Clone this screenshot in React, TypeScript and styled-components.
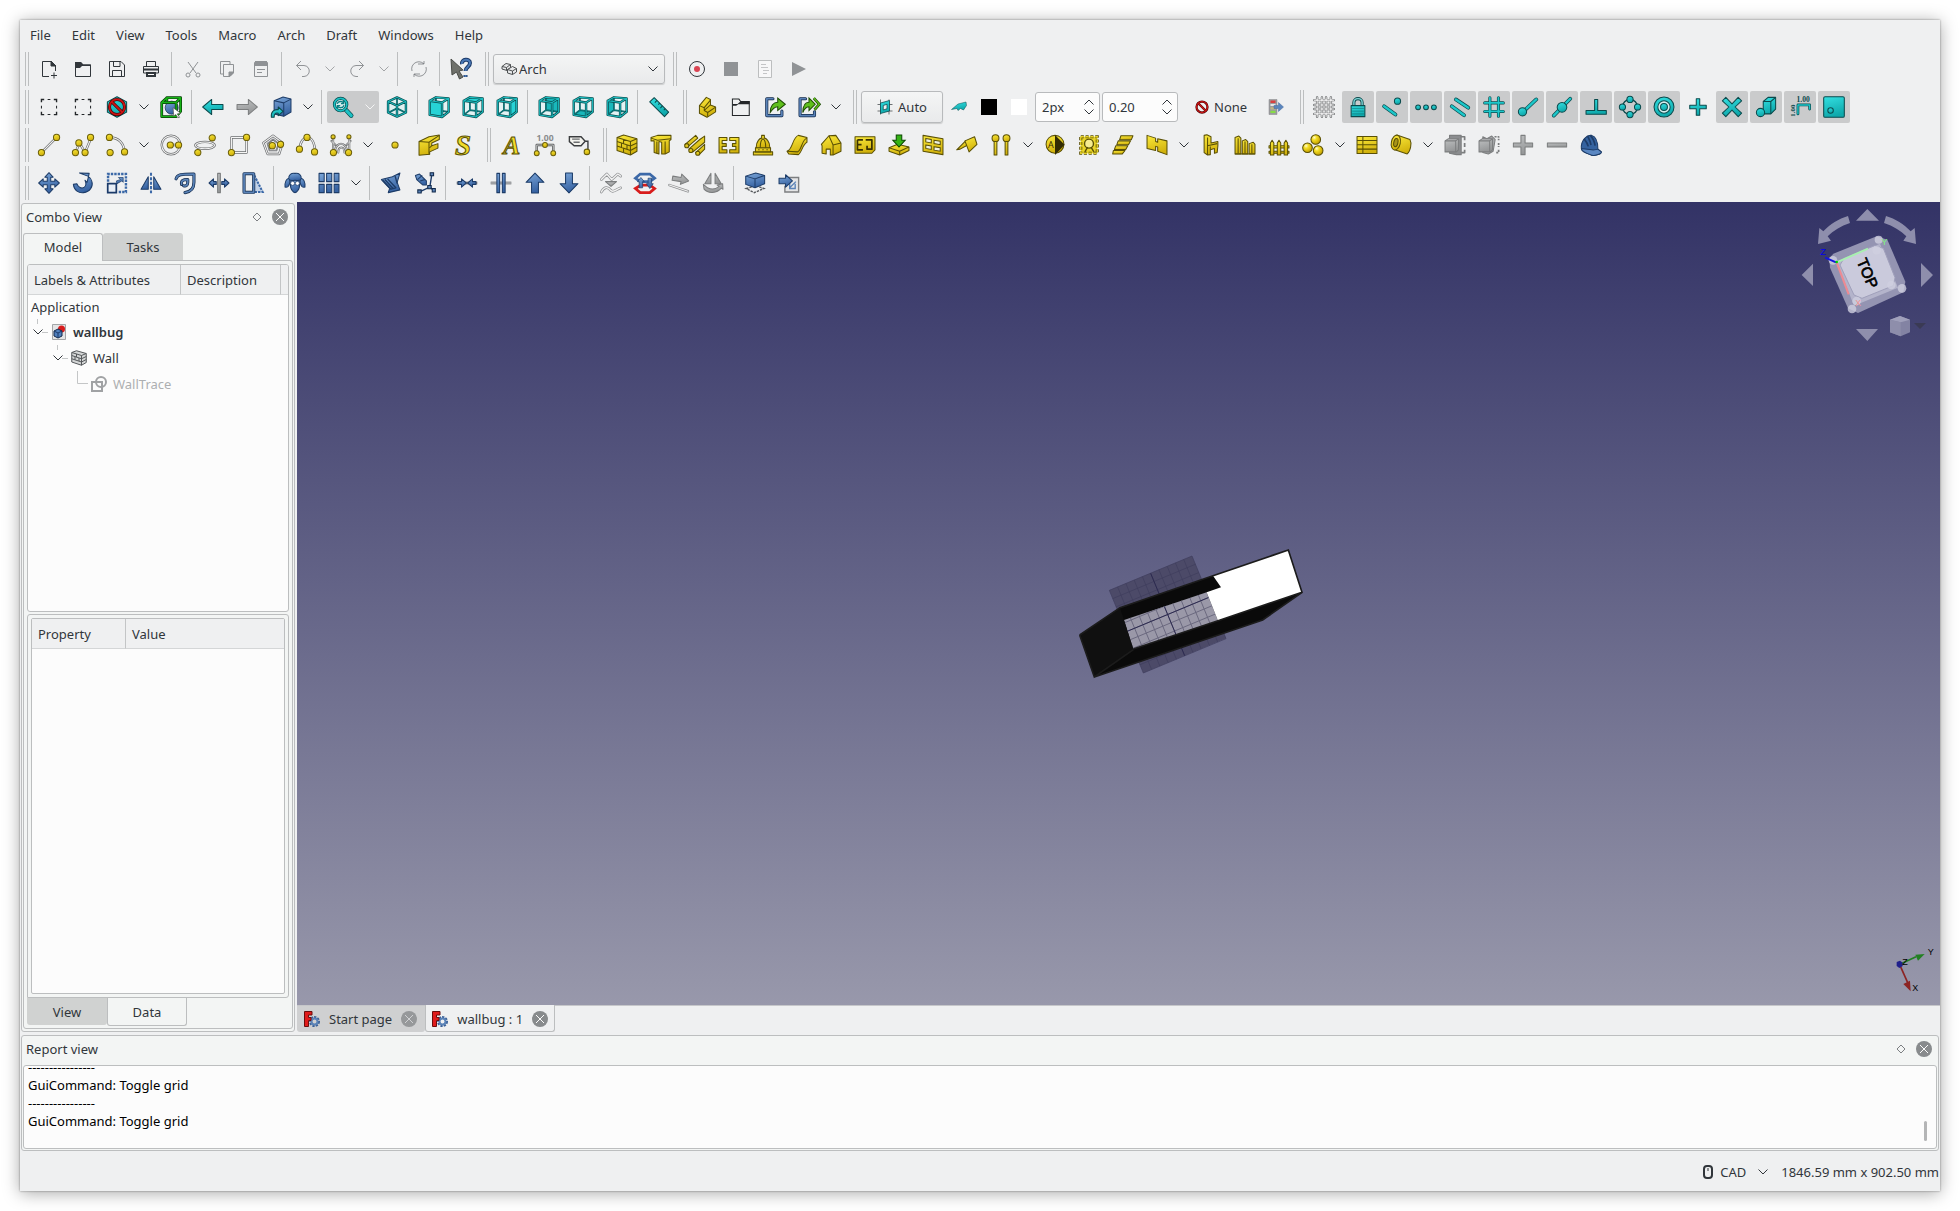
import React from "react";
import styled, { createGlobalStyle, css } from "styled-components";

const ink = "#31363b";
const line = "#bcbebf";
const panel = "#f3f5f4";
const chrome = "#eff0f1";
const paper = "#fcfcfc";

const GlobalStyle = createGlobalStyle`
  *, *::before, *::after { box-sizing: border-box; }
  body { margin: 0; background: #fff; }
  body, button, input, select {
    font-family: "Noto Sans", "Open Sans", sans-serif;
    font-size: 13px;
    line-height: 18px;
    color: ${ink};
  }
  button { border: 0; padding: 0; margin: 0; background: none; }
`;

/* ---------- icon drawing helpers (64-unit canvas) ---------- */

type Kids = { children?: React.ReactNode; w?: number };

const tone = (fill: string, stroke: string) =>
  function Tone({ children, w = 3 }: Kids) {
    return (
      <g fill={`url(#${fill})`} stroke={stroke} strokeWidth={w} strokeLinejoin="round">
        {children}
      </g>
    );
  };
const Au = tone("gold", "#5a5005");
const Te = tone("teal", "#0b4a4c");
const Bl = tone("blue", "#1d3c68");
const Gy = tone("grey", "#7c7e7f");

const Wire = ({ d, a = "#6b6d6f", b = "#f6f6f6", w = 7 }: { d: string; a?: string; b?: string; w?: number }) => (
  <g fill="none" strokeLinejoin="round" strokeLinecap="round">
    <path d={d} stroke={a} strokeWidth={w} />
    <path d={d} stroke={b} strokeWidth={w - 4} />
  </g>
);

const Dots = ({ at, r = 9 }: { at: number[][]; r?: number }) => (
  <g>
    {at.map(([x, y]) => (
      <circle key={`${x}-${y}`} cx={x} cy={y} r={r} fill="url(#gold)" stroke="#6b5f0a" strokeWidth="3" />
    ))}
  </g>
);

const F1 = "5,14", F2 = "41,19", F3 = "41,61", F4 = "5,55";
const B1 = "23,4", B2 = "60,7", B3 = "60,46", B4 = "23,41";
const faces: Record<string, string> = {
  front: [F1, F2, F3, F4].join(" "),
  top: [F1, F2, B2, B1].join(" "),
  right: [F2, B2, B3, F3].join(" "),
  rear: [B1, B2, B3, B4].join(" "),
  bottom: [F4, F3, B3, B4].join(" "),
  left: [F1, B1, B4, F4].join(" "),
};
const ViewCube = ({ face }: { face: string }) => {
  const back = `M${B1}L${B4}L${F4}M${B4}L${B3}`;
  const edge = `M${F1}L${F2}L${F3}L${F4}ZM${F1}L${B1}L${B2}L${B3}L${F3}M${F2}L${B2}`;
  const hidden = face === "rear" || face === "bottom" || face === "left";
  return (
    <g>
      <polygon points={`${F1} ${B1} ${B2} ${B3} ${F3} ${F4}`} fill="#e3f3f4" />
      {hidden && <polygon points={faces[face]} fill="#19b8bb" />}
      <Wire d={back} a="#0a6063" b="#17a5a8" w={5} />
      {!hidden && <polygon points={faces[face]} fill="#27d3d6" />}
      <Wire d={edge} a="#0a4b4d" b="#1cc0c3" w={7} />
    </g>
  );
};

const No = () => (
  <g fill="none">
    <circle cx="32" cy="32" r="22" stroke="#4a0505" strokeWidth="9" />
    <path d="M17 17L47 47" stroke="#4a0505" strokeWidth="9" />
    <circle cx="32" cy="32" r="22" stroke="#cc1414" strokeWidth="5" />
    <path d="M17 17L47 47" stroke="#cc1414" strokeWidth="5" />
  </g>
);

const art: Record<string, React.ReactNode> = {
  box: (
    <g fill="none" stroke="#232629" strokeWidth="4">
      <path d="M10 18v-8h8M46 10h8v8M54 46v8h-8M18 54h-8v-8" />
      <path d="M28 10h8M28 54h8M10 28v8M54 28v8" strokeWidth="3" />
    </g>
  ),
  noDraw: (<><Te><path d="M32 2L60 17V47L32 62L4 47V17Z" /></Te><No /></>),
  bound: (
    <g>
      <circle cx="34" cy="34" r="19" fill="url(#blue)" stroke="#12294a" strokeWidth="2" />
      <Wire d="M5 19H47V60H5ZM5 19L20 5H60V45L47 60M47 19L60 5M20 5V14" a="#063c06" b="#16b216" w={8} />
      <path d="M38 34L60 50L50 52L57 62L52 63L46 54L40 58Z" fill="#fff" stroke="#555" strokeWidth="2" />
    </g>
  ),
  left: (<Te><path d="M2 32L28 10V25H61V39H28V54Z" /></Te>),
  right: (<Gy><path d="M62 32L36 10V25H3V39H36V54Z" /></Gy>),
  link: (
    <>
      <Bl><path d="M12 14L38 3L61 9V47L40 59L12 52Z" /><path d="M12 14L40 20L61 9M40 20V59" fill="none" /></Bl>
      <Te><path d="M4 62C2 46 12 38 24 40V32L38 45L24 57V50C14 48 12 54 12 62Z" /></Te>
    </>
  ),
  zoom: (
    <>
      <Wire d="M38 38L56 57" a="#0a4b4d" b="#1cc0c3" w={13} />
      <circle cx="25" cy="25" r="18" fill="#d9f0f0" stroke="#0a4b4d" strokeWidth="9" />
      <circle cx="25" cy="25" r="18" fill="none" stroke="#1cc0c3" strokeWidth="5" />
      <path d="M15 23C18 14 30 14 34 21M35 27C32 36 20 36 16 29M34 13V22H26M16 37V28H24" fill="none" stroke="#0c8083" strokeWidth="4" />
    </>
  ),
  iso: (
    <>
      <path d="M32 4L58 16V48L32 60L6 48V16Z" fill="#dff1f2" />
      <Wire d="M32 36V8M32 36L8 48M32 36L56 48" a="#0a6063" b="#17a5a8" w={5} />
      <Wire d="M32 4L58 16V48L32 60L6 48V16ZM6 16L32 28L58 16M32 28V60" a="#0a4b4d" b="#1cc0c3" />
    </>
  ),
  ruler: (
    <Te><path d="M5 17L18 5L60 47L48 60Z" /><path d="M26 13L20 19M34 21L30 25M42 29L36 35M50 37L46 41" fill="none" /></Te>
  ),
  part: (
    <Au><path d="M10 28L30 4L42 10V26L57 32V46L32 62L10 50Z" /><path d="M10 28L24 34L42 12M24 34V42L34 48L56 33M34 48V60M24 42L42 26" fill="none" /></Au>
  ),
  group: (
    <><path d="M7 9H26L31 16H56V57H7Z" fill="none" stroke="#232629" strokeWidth="3" /><path d="M31 15H57V24H24L18 28H8V23H22Z" fill="#232629" /></>
  ),
  linkMake: (
    <>
      <Wire d="M26 8H8V57H52V44" a="#12294a" b="#5a83b8" w={9} />
      <path d="M18 48C18 28 28 18 40 18V6L62 24L40 42V31C30 31 24 38 18 48Z" fill="#5fbf1c" stroke="#1d4a04" strokeWidth="3" />
    </>
  ),
  linkMore: (
    <>
      <Wire d="M22 8H6V57H48V46" a="#12294a" b="#5a83b8" w={9} />
      <path d="M14 48C14 28 22 18 32 18V6L50 24L32 42V31C24 31 18 38 14 48Z" fill="#5fbf1c" stroke="#1d4a04" strokeWidth="3" />
      <path d="M46 6L62 24L48 40" fill="none" stroke="#1d4a04" strokeWidth="8" />
      <path d="M46 6L62 24L48 40" fill="none" stroke="#5fbf1c" strokeWidth="4" />
    </>
  ),
  plane: (
    <>
      <path d="M2 22H62M2 48H62M14 2V62M48 2V62" stroke="#6c7072" strokeWidth="4" />
      <Te><path d="M14 16L50 6V48L14 58Z" /></Te>
      <path d="M25 26L40 21V39L25 44Z" fill="#eff0f1" stroke="#0b4a4c" strokeWidth="3" />
    </>
  ),
  plane2: (<Te w={2}><path d="M2 42L28 20L60 12L62 26L50 44L38 38L28 46L24 38Z" /></Te>),
  none: <No />,
  apply: (
    <>
      <path d="M4 2H36V62H4Z" fill="#9a9c9e" stroke="#858789" strokeWidth="2" />
      <path d="M10 6H30V16H10Z" fill="#d8403f" /><path d="M10 20H30V28H10Z" fill="#e4e5e6" /><path d="M10 33H30V42H10Z" fill="#c2b682" /><path d="M10 47H30V56H10Z" fill="#86dc46" />
      <path d="M24 26H42V14L62 32L42 50V38H24Z" fill="#5a85bd" stroke="#44699e" strokeWidth="2" />
    </>
  ),
  grid: (<Wire d="M12 4V60M26 4V60M38 4V60M52 4V60M4 12H60M4 26H60M4 38H60M4 52H60" a="#5c5e60" b="#fff" w={7} />),
  lock: (<><path d="M20 30V19C20 4 44 4 44 19V30" fill="none" stroke="#0b4a4c" strokeWidth="9" /><path d="M20 30V19C20 4 44 4 44 19V30" fill="none" stroke="#7fd6d8" strokeWidth="4" /><Te><path d="M12 28H52V60H12Z" /></Te><path d="M15 36H49M15 44H49M15 52H49" stroke="#0b7a7c" strokeWidth="2" /></>),
  sNear: (<><Wire d="M9 30L42 54" a="#0b4a4c" b="#1cc7ca" w={11} /><Te><circle cx="48" cy="15" r="9" /></Te></>),
  sExt: (<Te><circle cx="9" cy="33" r="7" /><circle cx="32" cy="33" r="7" /><circle cx="55" cy="33" r="7" /></Te>),
  sPar: (<Wire d="M20 10L56 34M8 30L44 56" a="#0b4a4c" b="#1cc7ca" w={11} />),
  sGrid: (<Wire d="M20 5V59M45 5V59M5 20H59M5 45H59" a="#0b4a4c" b="#1cc7ca" w={9} />),
  sEnd: (<><Wire d="M20 44L56 10" a="#0b4a4c" b="#1cc7ca" w={11} /><Te><circle cx="16" cy="46" r="12" /></Te></>),
  sMid: (<><Wire d="M8 57L56 8" a="#0b4a4c" b="#1cc7ca" w={11} /><Te><circle cx="32" cy="33" r="14" /></Te></>),
  sPerp: (<Te><path d="M28 10H37V42H62V53H3V42H28Z" /></Te>),
  sAngle: (<><circle cx="32" cy="32" r="22" fill="none" stroke="#0b4a4c" strokeWidth="4" /><Te><circle cx="32" cy="10" r="9" /><circle cx="10" cy="32" r="9" /><circle cx="54" cy="32" r="9" /><circle cx="32" cy="54" r="9" /></Te></>),
  sCenter: (<><Te><circle cx="32" cy="32" r="29" /></Te><circle cx="32" cy="32" r="18" fill="#d3eeee" stroke="#0b4a4c" strokeWidth="3" /><Te><circle cx="32" cy="32" r="10" /></Te></>),
  sPlus: (<Te><path d="M27 8H37V27H56V37H37V56H27V37H8V27H27Z" /></Te>),
  sInter: (<Te><path d="M4 14L14 4L32 23L50 4L60 14L41 32L60 50L50 60L32 41L14 60L4 50L23 32Z" /></Te>),
  sSpec: (<Te><path d="M24 16L38 4H60V38L46 52H24Z" /><path d="M24 16H46V52M46 16L60 4" fill="none" /><circle cx="16" cy="48" r="12" /></Te>),
  sDim: (
    <>
      <Wire d="M26 52V26H60V38" a="#0b4a4c" b="#1cc7ca" w={8} />
      <text x="22" y="17" fontSize="22" fontWeight="700" fontFamily="Liberation Serif, serif" fill="#0b4a4c">1.00</text>
      <text transform="translate(16 60) rotate(-90)" fontSize="20" fontWeight="700" fontFamily="Liberation Serif, serif" fill="#0b4a4c">1.00</text>
    </>
  ),
  sWp: (<Te><rect x="2" y="2" width="60" height="60" rx="4" /><circle cx="22" cy="42" r="8" /></Te>),

  dLine: (<><Wire d="M10 54L54 10" /><Dots at={[[10, 54], [54, 10]]} /></>),
  dWire: (<><Wire d="M10 54L22 26L38 54L56 10" /><Dots at={[[10, 54], [20, 26], [38, 54], [54, 10]]} /></>),
  dArc: (<><Wire d="M12 10C36 10 52 26 54 52" /><Dots at={[[10, 10], [54, 52], [12, 54]]} /></>),
  dCircle: (<><Wire d="M5 32a27 27 0 1 0 54 0a27 27 0 1 0 -54 0" /><Wire d="M32 32H52" /><Dots at={[[30, 32], [54, 32]]} /></>),
  dEllipse: (<><Wire d="M4 33a28 10 0 1 0 56 0a28 10 0 1 0 -56 0" /><Dots at={[[11, 54], [53, 11]]} /></>),
  dRect: (<><Wire d="M10 10H54V54H10Z" /><Dots at={[[54, 10], [10, 54]]} /></>),
  dPoly: (<><Wire d="M32 5L60 26L50 58H16L4 26Z" /><Wire d="M32 16L48 28L42 48H22L16 28Z" w={5} b="#dcdddf" /><Dots at={[[30, 34], [54, 30]]} /></>),
  dSpline: (<><Wire d="M10 46C12 20 24 10 32 10C44 10 54 24 56 52" /><Dots at={[[32, 10], [10, 44], [54, 52]]} /></>),
  dBezier: (<><Wire d="M9 8V54M56 8V54M14 54C14 20 50 20 50 54M24 54C24 34 42 34 42 54M4 20L16 32M60 20L48 32" w={6} /><Dots at={[[10, 54], [54, 54]]} /><Dots at={[[9, 8], [55, 8]]} r={6} /></>),
  dPoint: (<Dots at={[[32, 32]]} r={9} />),
  dFace: (<Au><path d="M3 22L32 8L62 3V16L40 26V34L58 28V41L34 52V59L3 62Z" /><path d="M3 22L32 24V60M32 24L62 4M40 34L34 40" fill="none" /></Au>),
  dString: (<text x="32" y="60" textAnchor="middle" fontSize="84" fontStyle="italic" fontWeight="700" fontFamily="Liberation Serif, serif" fill="#f0dc2a" stroke="#5a5005" strokeWidth="3">S</text>),
  dText: (<text x="34" y="57" textAnchor="middle" fontSize="74" fontStyle="italic" fontWeight="700" fontFamily="Liberation Serif, serif" fill="#f0dc2a" stroke="#5a5005" strokeWidth="3">A</text>),
  dDim: (
    <>
      <Wire d="M8 56V32H56V56" a="#4d4f51" b="#c9cbcc" />
      <Dots at={[[32, 32], [8, 56], [56, 56]]} r={7} />
      <text x="32" y="20" textAnchor="middle" fontSize="25" fontWeight="700" fontFamily="Noto Sans, sans-serif" fill="#8a8c8e">1.00</text>
    </>
  ),
  dLabel: (<><path d="M4 8H38L50 21L38 34H18L4 22Z" fill="#f3f3ee" stroke="#3b3d3f" strokeWidth="4" /><path d="M12 15H34M16 24H34" stroke="#6b6d6f" strokeWidth="4" /><path d="M50 21H58V50" fill="none" stroke="#3b3d3f" strokeWidth="4" /><Dots at={[[55, 52]]} r={8} /></>),
  wall: (<Au><path d="M3 10L22 3L61 14V50L42 61L3 48Z" /><path d="M3 10L42 22L61 14M42 22V61M3 22L42 35L61 26M3 35L42 48L61 38M22 16V28M32 32V44M16 27V39M22 42V54" fill="none" /></Au>),
  structure: (<Au><path d="M3 10L22 4H61V16L56 20V52L44 58H34V24L26 22V58L12 54V20H3Z" /><path d="M3 12L22 18L61 14M44 22V58M20 22V56" fill="none" /></Au>),
  rebar: (<Au><path d="M3 30L34 4L40 12L10 38Z" /><path d="M14 44L46 16L60 6V24L26 52Z" /><path d="M34 54L60 30V44L44 60Z" /><circle cx="8" cy="34" r="6" /><circle cx="20" cy="48" r="6" /><circle cx="40" cy="56" r="6" /></Au>),
  floor: (<Au><path d="M3 10H26V19H12V28H24V36H12V46H26V55H3Z" /><path d="M34 10H61V55H34V46H52V36H42V28H52V19H34Z" /></Au>),
  dome: (<Au><path d="M4 52H60V61H4Z" /><path d="M10 40H54V52H10Z" /><path d="M12 40C12 20 24 12 28 12V4H36V12C40 12 52 20 52 40Z" /><path d="M24 40C24 26 28 16 32 14C36 16 40 26 40 40M18 46H22M30 46H34M42 46H46" fill="none" /></Au>),
  slab: (<Au><path d="M3 50C20 46 18 10 36 4L61 10V24C48 30 46 54 36 60L8 58Z" /><path d="M3 50L34 52C46 46 46 16 61 12" fill="none" /></Au>),
  house: (<Au><path d="M4 30L26 5L46 4L61 26V50L38 61H30V44H18V58L6 56V34Z" /><path d="M26 5L38 32V61M38 32L61 26" fill="none" /></Au>),
  sheet: (<Au><path d="M3 8H61V46L52 56H3Z" /><path d="M10 17H26M10 17V46H26M10 31H22M34 17H52V44H38V34" fill="none" strokeWidth="5" stroke="#3a3203" /></Au>),
  load: (<><Au><path d="M3 40L28 30L61 38V48L34 61L3 50Z" /><path d="M3 40L34 50L61 38M34 50V61" fill="none" /></Au><path d="M24 3H40V18H50L32 38L14 18H24Z" fill="#34b215" stroke="#0c4a03" strokeWidth="3" /></>),
  window: (<><Au><path d="M3 4L61 14V60L3 50Z" /></Au><g fill="#eef0e0" stroke="#5a5005" strokeWidth="3"><path d="M11 13L27 16V26L11 23ZM35 18L53 21V31L35 28ZM11 32L27 35V45L11 42ZM35 37L53 40V50L35 47Z" /></g></>),
  roof: (<Au><path d="M2 46L28 20L34 32L12 44Z" /><path d="M26 20L54 8L61 30L38 52Z" /></Au>),
  axis: (<Au><path d="M12 16H20V61H12ZM44 16H52V61H44Z" /><circle cx="16" cy="12" r="10" /><circle cx="48" cy="12" r="10" /></Au>),
  section: (<><Au><circle cx="32" cy="30" r="26" /></Au><path d="M32 3V61L60 31Z" fill="#332c03" /><text x="20" y="40" textAnchor="middle" fontSize="26" fontFamily="Noto Sans, sans-serif" fill="#332c03">A</text></>),
  space: (<><path d="M8 8H56V56H8Z" fill="#e9d428" stroke="#5a5005" strokeWidth="9" strokeDasharray="9 5" /><path d="M8 8H56V56H8Z" fill="none" stroke="#e9d428" strokeWidth="4" strokeDasharray="9 5" /><circle cx="32" cy="28" r="13" fill="#f6ec90" stroke="#5a5005" strokeWidth="4" /><path d="M20 52L28 38M46 52L38 38" stroke="#5a5005" strokeWidth="4" /></>),
  stairs: (<Au><path d="M26 5H61L56 17H22Z" /><path d="M18 20H54L48 31H14Z" /><path d="M11 34H46L40 45H7Z" /><path d="M4 48H38L30 58H2Z" /></Au>),
  panelI: (<Au><path d="M3 4L28 12V22L34 24V14L61 20V60L34 50V38L28 36V48L3 42Z" /></Au>),
  chair: (<Au><path d="M12 4L20 2L32 8V26L52 22V34L50 54L42 56V42L30 46V60L22 61L12 54Z" /><path d="M22 10V61M22 34L50 28M30 46V36" fill="none" /></Au>),
  frame: (<Au><path d="M3 10L14 6L20 12V58H3Z" /><path d="M24 20L34 16L40 22V58H24Z" /><path d="M44 28L56 24L61 30V58H44Z" /><path d="M3 58H61" /><path d="M12 12V56M32 22V56M52 30V56" fill="none" /></Au>),
  fence: (<Au><path d="M3 34H61V41H3ZM3 50H61V56H3Z" /><path d="M7 26L12 18L17 26V61H7ZM27 26L32 18L37 26V61H27ZM47 26L52 18L57 26V61H47Z" /></Au>),
  balls: (<g fill="url(#ball)" stroke="#5a5005" strokeWidth="3"><circle cx="40" cy="16" r="14" /><circle cx="16" cy="40" r="14" /><circle cx="47" cy="48" r="14" /></g>),
  sched: (<Au><path d="M3 7H61V57H3Z" /><path d="M20 7V57M3 19H61M3 31H61M3 44H61" fill="none" /></Au>),
  pipe: (<Au><path d="M20 3L58 16C64 26 60 50 50 58L14 46Z" /><ellipse cx="17" cy="25" rx="13" ry="22" transform="rotate(12 17 25)" /><ellipse cx="17" cy="25" rx="6" ry="12" transform="rotate(12 17 25)" fill="#a8941a" /></Au>),
  cut1: (<Gy><path d="M16 4H50V60H36L16 56Z" fill="#8b8d8f" /><path d="M3 20L12 14H42V46L36 52H3Z" /><path d="M3 20H34V52M34 20L42 14" fill="none" /><path d="M48 8H60V18M60 26V38M60 46V54H50" fill="none" strokeWidth="5" /></Gy>),
  cut2: (<Gy><path d="M14 8L26 14L40 6L50 16L44 50L30 58L14 54Z" fill="#a5a7a9" /><path d="M3 20L12 14H42V46L36 52H3Z" /><path d="M3 20H34V52M34 20L42 14" fill="none" /><path d="M48 8H60V18M60 26V38M60 46V54H50" fill="none" strokeWidth="5" strokeDasharray="6 3" /></Gy>),
  plus: (<Gy><path d="M26 4H38V26H60V38H38V60H26V38H4V26H26Z" /></Gy>),
  minus: (<Gy><path d="M4 26H60V38H4Z" /></Gy>),
  helmet: (<Bl><path d="M4 42C2 18 20 2 34 4C48 8 52 26 52 44L62 52C62 58 40 66 30 60C18 56 4 50 4 42Z" fill="#34629f" /><path d="M22 6C26 14 30 20 32 32M30 4C38 12 42 22 44 34M12 14C18 22 22 28 24 36" fill="none" strokeWidth="5" /><path d="M4 42C20 44 40 50 52 44L62 52C62 58 40 66 30 60C18 56 4 50 4 42Z" fill="#5a87c2" /></Bl>),

  move: (<Bl><path d="M32 2L44 15H37V27H49V20L62 32L49 44V37H37V49H44L32 62L20 49H27V37H15V44L2 32L15 20V27H27V15H20Z" /></Bl>),
  rotate: (<Bl><path d="M22 3L50 4L44 30L38 24C36 22 46 36 36 44C28 50 18 44 14 34L4 36C6 54 20 62 34 60C52 58 62 42 58 28C56 20 50 14 46 12Z" /></Bl>),
  scale: (<><path d="M6 28V6H58V58H34" fill="none" stroke="#3c69a8" strokeWidth="7" strokeDasharray="7 3" /><path d="M5 34H30V60H5Z" fill="#e8eef6" stroke="#1b3a69" strokeWidth="5" /><Bl w={2}><path d="M30 26L42 22L36 16H50V30L46 26L32 34Z" /></Bl></>),
  mirror: (<><Bl><path d="M24 14V50H3Z" /><path d="M40 14V50H61Z" /></Bl><path d="M32 2V62" stroke="#3c69a8" strokeWidth="6" strokeDasharray="9 4" /></>),
  offset: (<><Wire d="M6 20C10 6 20 6 58 6V30C58 48 48 58 32 60" a="#12294a" b="#5a83b8" w={9} /><Wire d="M22 36C20 24 26 22 40 22V30C40 40 34 42 28 40" a="#12294a" b="#5a83b8" w={9} /></>),
  trim: (<><Gy><path d="M28 4H36V60H28Z" /></Gy><Bl><path d="M3 32L16 20V28H24V36H16V44ZM61 32L48 20V28H40V36H48V44Z" /></Bl></>),
  stretch: (<><path d="M36 10L60 58H34" fill="#c3d3e8" stroke="#3c69a8" strokeWidth="6" strokeDasharray="7 3" /><Wire d="M6 5H34V59H6Z" a="#12294a" b="#5a83b8" w={9} /></>),
  sheep: (
    <Bl>
      <path d="M17 18C6 18 2 30 3 44C10 46 16 40 17 30Z" />
      <path d="M47 18C58 18 62 30 61 44C54 46 48 40 47 30Z" />
      <path d="M16 18C22 30 14 44 24 54C28 62 36 62 40 54C50 44 42 30 48 18Z" />
      <path d="M14 20C12 8 22 2 32 4C42 2 52 8 50 20C46 28 38 24 32 24C26 24 18 28 14 20Z" />
      <circle cx="25" cy="33" r="6" fill="#fff" strokeWidth="2" /><circle cx="39" cy="33" r="6" fill="#fff" strokeWidth="2" />
    </Bl>
  ),
  array: (<Bl><path d="M3 4H18V28H3ZM25 4H40V28H25ZM47 4H61V28H47ZM3 36H18V60H3ZM25 36H40V60H25ZM47 36H61V60H47Z" /></Bl>),
  edit: (<Bl><path d="M4 22L36 14L58 3L50 30L58 52L24 60L28 48Z" /><path d="M8 24L32 50L46 46L22 20M14 22L38 48M44 12L50 34" fill="none" strokeWidth="4" /></Bl>),
  subEdit: (<><Bl><path d="M4 10L16 6L36 26V38L26 38L8 22Z" /><path d="M10 22L24 10M18 26L32 22" fill="none" /></Bl><path d="M52 6L46 44L16 58M46 44L58 54" fill="none" stroke="#1b3a69" strokeWidth="4" /><g fill="#5a83b8" stroke="#12294a" strokeWidth="3"><path d="M47 2H57V11H47ZM40 39H50V49H40ZM11 52H21V61H11ZM53 48H62V58H53Z" /></g></>),
  join: (<><path d="M2 32H62" stroke="#777a7d" strokeWidth="8" /><Bl><path d="M30 32L16 20V28H6V36H16V44ZM34 32L48 20V28H58V36H48V44Z" /></Bl></>),
  split: (<><path d="M2 32H62" stroke="#777a7d" strokeWidth="8" /><path d="M2 32H62" stroke="#c3c5c7" strokeWidth="3" /><Bl><path d="M20 4H28V60H20ZM36 4H44V60H36Z" /></Bl></>),
  up: (<Bl><path d="M32 3L58 30H42V61H22V30H6Z" /></Bl>),
  down: (<Bl><path d="M32 61L58 34H42V3H22V34H6Z" /></Bl>),
  wp1: (<><Wire d="M4 22L20 6L34 22L52 6L60 12M4 58C14 40 24 44 32 54C40 62 50 48 60 46" a="#8e9092" b="#f2f2f2" w={8} /><Gy><path d="M16 28H48L32 42Z" /></Gy></>),
  wp2: (<><path d="M4 48L20 38H46L60 48L46 60H18Z" fill="none" stroke="#d81c1c" strokeWidth="8" /><path d="M4 18L18 6H46L60 18L46 28H18Z" fill="none" stroke="#3c69a8" strokeWidth="8" /><Bl w={2}><path d="M20 16L30 28H25V46H15V28H10ZM46 48L36 34H41V18H51V34H56Z" /></Bl></>),
  wp3: (<><Gy><path d="M14 12L38 16L40 6L60 26L36 36L38 28L12 24Z" /></Gy><Wire d="M4 38L58 56" a="#8e9092" b="#f2f2f2" /></>),
  wp4: (<Gy><path d="M26 4V34H8ZM38 4V34H56Z" /><path d="M4 36L16 46C28 52 40 50 50 42L44 38L60 34L61 50L56 47C44 62 18 64 6 50Z" /></Gy>),
  shape2d: (<><path d="M6 48L34 40L58 48L30 60Z" fill="none" stroke="#55585b" strokeWidth="4" strokeDasharray="7 3" /><Bl><path d="M5 12L34 3L60 10V34L32 46L5 36Z" /><path d="M5 12L32 20L60 10M32 20V46" fill="none" /></Bl></>),
  toSketch: (<><path d="M26 16H60V58H20V40" fill="#e4e5e6" stroke="#7c7e80" strokeWidth="4" /><path d="M34 46L52 28M34 30V48H50V34" fill="none" stroke="#5a83b8" strokeWidth="4" /><Bl><path d="M3 18H22V8L42 26L22 44V34H3Z" /></Bl></>),
  house2: (<g fill="#e9eaeb" stroke="#4d5052" strokeWidth="4" strokeLinejoin="round"><path d="M4 22L20 10L38 14V26L24 38L4 32Z" /><path d="M26 34L46 22L62 30V44L46 54L26 48Z" /><path d="M4 22L22 26L38 14M26 34L46 40L62 30M46 40V54M22 26V36" fill="none" /></g>),
};

/* thin-line system icons drawn on a 22-unit canvas */
const thin: Record<string, React.ReactNode> = {
  new: (<><path d="M4.500 3.500H13L17.500 8V13M11 18.500H4.500V3.500" /><path d="M13 3V8H18Z" fill={ink} /><path d="M13 17.500H19M16 14.500V20.500" /></>),
  open: (<><path d="M3.500 18.500V4.500H9L11 7H18.500V18.500Z" /><path d="M3 4H9L11 6.500H19V8H10L8 10H3Z" fill={ink} stroke="none" /></>),
  save: (<path d="M3.500 3.500H15L18.500 7V18.500H3.500ZM7.500 3.500V8.500H14V3.500M6.500 18.500V12.500H15.500V18.500" />),
  print: (<><path d="M6.500 8V3.500H15.500V8M3.500 15V8.500H18.500V15H16M6 15H3.500" /><path d="M3 11.500H19" strokeWidth="2" /><path d="M6 14H16V19H6Z" fill={ink} stroke="none" /><path d="M8 16.500H14" stroke="#fff" /></>),
  cut: (<><path d="M6 4L14 15M16 4L8 15" /><circle cx="6" cy="17" r="2" /><circle cx="16" cy="17" r="2" /></>),
  copy: (<><path d="M8 16H4.500V3.500H14V6" /><path d="M7.500 6.500H17.500V15L14 18.500H7.500Z" /><path d="M13 19V14H18Z" fill={ink} /></>),
  paste: (<><path d="M4.500 4.500H17.500V18.500H4.500Z" /><path d="M5 3H17V8H5Z" fill={ink} stroke="none" /><path d="M7 11.500H15M7 14.500H12" /></>),
  undo: (<path d="M9 3L4.500 7.500L9 12M5 7.500H12C19 8 19 18 12 18.500H10" />),
  redo: (<path d="M13 3L17.500 7.500L13 12M17 7.500H10C3 8 3 18 10 18.500H12" />),
  refresh: (<path d="M4 13C2 6 10 1 15.500 5.500M18 9C20 16 12 21 6.500 16.500M10 6H16V3M12 16H6V19" />),
  rec: (<><circle cx="11" cy="11" r="7.500" /><circle cx="11" cy="11" r="3" fill="#da4453" stroke="none" /></>),
  stop: (<path d="M4 4H18V18H4Z" fill={ink} stroke="none" />),
  play: (<path d="M4 4L18 11L4 18Z" fill={ink} stroke="none" />),
  macro: (<><path d="M4.500 2.500H17.500V19.500H4.500Z" fill="#fff" stroke="#8b8d8f" /><path d="M7 6.500H12M7 9.500H14M9 12.500H15M9 15.500H13" stroke="#9a9c9e" /></>),
  what: (
    <>
      <path d="M1 1L13 12L9 13L13 19L9.500 21L6.500 14L2 17Z" fill="#6f716b" stroke="#4a4c48" />
      <path d="M12 6C11 1 20 0 20 5C20 9 15.500 9 15.500 13M15.500 17V19" stroke="#1b3a69" strokeWidth="4" />
      <path d="M12 6C11 1 20 0 20 5C20 9 15.500 9 15.500 13M15.500 17V19" stroke="#4a78b5" strokeWidth="2" />
    </>
  ),
};

const IconSvg = styled.svg<{ $s?: number; $dim?: boolean }>`
  display: block;
  flex: none;
  overflow: visible;
  width: ${(p) => p.$s ?? 22}px;
  height: ${(p) => p.$s ?? 22}px;
  opacity: ${(p) => (p.$dim ? 0.5 : 1)};
`;

const Icon = ({ name, size, dim }: { name: string; size?: number; dim?: boolean }) => {
  if (thin[name])
    return (
      <IconSvg viewBox="0 0 22 22" $s={size} $dim={dim} fill="none" stroke={ink} aria-hidden>
        {thin[name]}
      </IconSvg>
    );
  return (
    <IconSvg viewBox="0 0 64 64" $s={size} $dim={dim} aria-hidden>
      {name.startsWith("view:") ? <ViewCube face={name.slice(5)} /> : art[name]}
    </IconSvg>
  );
};

const ChevronSvg = styled.svg`
  display: block;
  flex: none;
  width: 10px;
  height: 6px;
  overflow: visible;
  pointer-events: none;
`;
const Chevron = ({ color = ink, up }: { color?: string; up?: boolean }) => (
  <ChevronSvg viewBox="0 0 10 6" fill="none" stroke={color} aria-hidden>
    <path d={up ? "M0.500 5.500L5 1L9.500 5.500" : "M0.500 0.500L5 5L9.500 0.500"} />
  </ChevronSvg>
);

const HiddenDefs = styled.svg`
  position: absolute;
  width: 0;
  height: 0;
`;
const Gradients = () => (
  <HiddenDefs aria-hidden>
    <defs>
      {[
        ["gold", "#fbea3c", "#d2b20c"],
        ["teal", "#34e0e2", "#0fa9ac"],
        ["blue", "#7ba6d8", "#3763a3"],
        ["grey", "#bfc1c2", "#959798"],
      ].map(([id, a, b]) => (
        <linearGradient key={id} id={id} x1="0" y1="0" x2="0.3" y2="1">
          <stop offset="0" stopColor={a} />
          <stop offset="1" stopColor={b} />
        </linearGradient>
      ))}
      <radialGradient id="ball" cx="0.35" cy="0.3" r="0.7">
        <stop offset="0" stopColor="#fffbd0" />
        <stop offset="0.35" stopColor="#f4de25" />
        <stop offset="1" stopColor="#c4a000" />
      </radialGradient>
    </defs>
  </HiddenDefs>
);

/* ---------- window shell ---------- */

const Desktop = styled.div`
  display: flex;
  height: 100vh;
  padding: 20px;
`;
const AppWindow = styled.div`
  flex: 1;
  min-width: 0;
  display: flex;
  flex-direction: column;
  background: ${chrome};
  box-shadow: 0 0 2px rgba(0, 0, 0, 0.4), 0 2px 16px rgba(0, 0, 0, 0.35);
`;

const MenuBar = styled.nav`
  display: flex;
  height: 30px;
  flex: none;
`;
const MenuItem = styled.button`
  padding: 0 11px 1px 10px;
`;

const ToolbarArea = styled.div`
  flex: none;
  display: flex;
  flex-direction: column;
  gap: 4px;
  padding: 2px 0 2px 5px;
`;
const ToolbarRow = styled.div`
  display: flex;
  gap: 8px;
  height: 34px;
`;
const Toolbar = styled.div`
  display: flex;
  align-items: center;
  gap: 2px;
`;
const Grip = styled.span`
  width: 4px;
  height: 34px;
  margin-right: 2px;
  border: solid ${line};
  border-width: 0 1px;
`;
const Separator = styled.span`
  width: 1px;
  height: 34px;
  margin: 0 3px 0 2px;
  background: ${line};
`;
const ToolButton = styled.button<{ $on?: boolean; $menu?: boolean; $w?: number; $icon?: number }>`
  display: flex;
  align-items: center;
  height: 32px;
  width: ${(p) => (p.$menu ? 52 : p.$w ?? 32)}px;
  padding-left: ${(p) => ((p.$w ?? 32) - (p.$icon ?? 22)) / 2}px;
  gap: 11px;
  border-radius: 2px;
  background: ${(p) => (p.$on ? "#cacbcc" : "transparent")};
`;
const Swatch = styled.span<{ $c: string }>`
  width: 16px;
  height: 16px;
  background: ${(p) => p.$c};
`;
const framed = css`
  border: 1px solid #b8babc;
  border-radius: 3px;
`;
const AutoButton = styled.button`
  ${framed}
  display: flex;
  align-items: center;
  justify-content: center;
  gap: 5px;
  width: 82px;
  height: 32px;
  background: linear-gradient(#f4f5f5, #e9eaeb);
  box-shadow: 0 1px 1px rgba(0, 0, 0, 0.15);
`;
const NoneButton = styled.button`
  display: flex;
  align-items: center;
  gap: 4px;
  width: 78px;
  height: 32px;
  padding-left: 14px;
`;
const ComboBox = styled.label`
  ${framed}
  display: flex;
  align-items: center;
  gap: 2px;
  width: 172px;
  height: 30px;
  padding: 0 6px 0 7px;
  background: linear-gradient(#f4f5f5, #e9eaeb);
  box-shadow: 0 1px 1px rgba(0, 0, 0, 0.15);
`;
const Select = styled.select`
  flex: 1;
  min-width: 0;
  appearance: none;
  border: 0;
  background: none;
`;
const SpinFrame = styled.span<{ $w: number }>`
  ${framed}
  display: flex;
  align-items: center;
  width: ${(p) => p.$w}px;
  height: 30px;
  padding: 0 5px 0 6px;
  background: ${paper};
`;
const SpinInput = styled.input`
  flex: 1;
  min-width: 0;
  border: 0;
  padding: 0;
  background: none;
`;
const Steps = styled.span`
  display: flex;
  flex-direction: column;
  gap: 4px;
`;

type Item = string | [string, string, string?];
/* flags: m = has menu, o = switched on, d = disabled, s = small icon */
const Tools = ({ items, label, children }: { items: Item[]; label: string; children?: React.ReactNode }) => (
  <Toolbar role="toolbar" aria-label={label}>
    <Grip />
    {children}
    {items.map((it, i) => {
      if (typeof it === "string") return <Separator key={i} />;
      const [name, title, f = ""] = it;
      const menu = f.includes("m");
      const on = f.includes("o");
      const size = f.includes("s") ? 16 : 22;
      return (
        <ToolButton key={i} aria-label={title} $menu={menu} $on={on} $icon={size}>
          <Icon name={name} dim={f.includes("d")} size={size} />
          {menu && <Chevron color={f.includes("d") ? "#a3a5a7" : on ? "#f4f4f4" : ink} />}
        </ToolButton>
      );
    })}
  </Toolbar>
);

const Spin = ({ value, label, width }: { value: string; label: string; width: number }) => (
  <SpinFrame $w={width}>
    <SpinInput aria-label={label} defaultValue={value} />
    <Steps>
      <button aria-label={`${label} up`}><Chevron up /></button>
      <button aria-label={`${label} down`}><Chevron /></button>
    </Steps>
  </SpinFrame>
);

const fileTools: Item[] = [
  ["new", "New"], ["open", "Open"], ["save", "Save"], ["print", "Print"], "|",
  ["cut", "Cut", "d"], ["copy", "Copy", "d"], ["paste", "Paste", "d"], "|",
  ["undo", "Undo", "dm"], ["redo", "Redo", "dm"], "|",
  ["refresh", "Refresh", "d"], "|", ["what", "What's this"],
];
const macroTools: Item[] = [["rec", "Record macro"], ["stop", "Stop recording", "d"], ["macro", "Macros", "d"], ["play", "Execute macro", "d"]];
const viewTools: Item[] = [
  ["box", "Box selection"], ["box", "Box element selection"], ["noDraw", "Draw style", "m"], ["bound", "Selection filter"], "|",
  ["left", "Back"], ["right", "Forward"], ["link", "Go to linked object", "m"], "|",
  ["zoom", "Sync view", "mo"], ["iso", "Isometric"], "|",
  ["view:front", "Front"], ["view:top", "Top"], ["view:right", "Right"], "|",
  ["view:rear", "Rear"], ["view:bottom", "Bottom"], ["view:left", "Left"], "|", ["ruler", "Measure"],
];
const structTools: Item[] = [["part", "Create part"], ["group", "Create group"], ["linkMake", "Make link"], ["linkMore", "Link actions", "m"]];
const snapTools: Item[] = [
  ["grid", "Toggle grid"], ["lock", "Snap lock", "o"], ["sNear", "Snap near", "o"], ["sExt", "Snap extension", "o"],
  ["sPar", "Snap parallel", "o"], ["sGrid", "Snap grid", "o"], ["sEnd", "Snap endpoint", "o"], ["sMid", "Snap midpoint", "o"],
  ["sPerp", "Snap perpendicular", "o"], ["sAngle", "Snap angle", "o"], ["sCenter", "Snap center", "o"], ["sPlus", "Snap ortho"],
  ["sInter", "Snap intersection", "o"], ["sSpec", "Snap special", "o"], ["sDim", "Snap dimensions", "o"], ["sWp", "Snap working plane", "o"],
];
const draftTools: Item[] = [
  ["dLine", "Line"], ["dWire", "Polyline"], ["dArc", "Arc", "m"], ["dCircle", "Circle"], ["dEllipse", "Ellipse"], ["dRect", "Rectangle"],
  ["dPoly", "Polygon"], ["dSpline", "B-spline"], ["dBezier", "Bezier", "m"], ["dPoint", "Point"], ["dFace", "Facebinder"], ["dString", "Shape from text"],
];
const noteTools: Item[] = [["dText", "Text"], ["dDim", "Dimension"], ["dLabel", "Label"]];
const archTools: Item[] = [
  ["wall", "Wall"], ["structure", "Structure"], ["rebar", "Rebar"], ["floor", "Floor"], ["dome", "Building"], ["slab", "Project"],
  ["house", "Site"], ["sheet", "Reference"], ["load", "External reference"], ["window", "Window"], ["roof", "Roof"], ["axis", "Axis", "m"],
  ["section", "Section plane"], ["space", "Space"], ["stairs", "Stairs"], ["panelI", "Panel", "m"], ["chair", "Equipment"],
  ["frame", "Frame"], ["fence", "Fence"], ["balls", "Material", "m"], ["sched", "Schedule"], ["pipe", "Pipe", "m"],
  ["cut1", "Cut with plane"], ["cut2", "Cut with line"], ["plus", "Add"], ["minus", "Remove"], ["helmet", "Survey"],
];
const modTools: Item[] = [
  ["move", "Move"], ["rotate", "Rotate"], ["scale", "Scale"], ["mirror", "Mirror"], ["offset", "Offset"], ["trim", "Trimex"], ["stretch", "Stretch"], "|",
  ["sheep", "Clone"], ["array", "Array", "m"], "|", ["edit", "Edit"], ["subEdit", "Subelement highlight"], "|",
  ["join", "Join"], ["split", "Split"], ["up", "Upgrade"], ["down", "Downgrade"], "|",
  ["wp1", "Wire to B-spline"], ["wp2", "Flip"], ["wp3", "Set slope"], ["wp4", "Flip dimension"], "|",
  ["shape2d", "Shape 2D view"], ["toSketch", "Draft to sketch"],
];

/* ---------- docks ---------- */

const Center = styled.div`
  flex: 1;
  min-height: 0;
  display: flex;
  gap: 2px;
  padding-left: 1px;
`;
const Dock = styled.section<{ $side?: boolean }>`
  display: flex;
  flex-direction: column;
  border: 1px solid ${line};
  border-radius: 3px;
  background: ${panel};
  padding: 0 1px ${(p) => (p.$side ? 2 : 1)}px;
  ${(p) =>
    p.$side
      ? css`flex: none; width: 274px; margin-top: 1px;`
      : css`flex: none; height: 116px; margin: 3px 1px 0;`}
`;
const DockTitle = styled.header`
  flex: none;
  display: flex;
  align-items: center;
  gap: 10px;
  height: 29px;
  padding: 0 5px 4px 3px;
`;
const DockName = styled.h2`
  flex: 1;
  margin: 0;
  padding-top: 1px;
  font-size: 13px;
  font-weight: 400;
`;
const Glyph = styled.svg<{ $s: number }>`
  display: block;
  width: ${(p) => p.$s}px;
  height: ${(p) => p.$s}px;
`;
const CloseButton = ({ dim }: { dim?: boolean }) => (
  <button aria-label="Close">
    <Glyph $s={16} viewBox="0 0 16 16">
      <circle cx="8" cy="8" r="8" fill={dim ? "#96989a" : "#888b8d"} />
      <path d="M4 4L12 12M12 4L4 12" stroke={dim ? "#d0d1d3" : "#fcfcfc"} fill="none" />
    </Glyph>
  </button>
);
const Title = ({ name }: { name: string }) => (
  <DockTitle>
    <DockName>{name}</DockName>
    <button aria-label="Float">
      <Glyph $s={10} viewBox="0 0 10 10">
        <path d="M5 1L9 5L5 9L1 5Z" fill="none" stroke="#7c7f82" />
      </Glyph>
    </button>
    <CloseButton />
  </DockTitle>
);

const Tabs = styled.div`
  flex: none;
  display: flex;
  height: 28px;
`;
const Tab = styled.button<{ $active?: boolean; $bottom?: boolean }>`
  width: 80px;
  height: ${(p) => (p.$active ? 28 : 27)}px;
  border-radius: ${(p) => (p.$bottom ? "0 0 3px 3px" : "3px 3px 0 0")};
  background: ${(p) => (p.$active ? panel : "#d0d2d1")};
  border: ${(p) => (p.$active ? 1 : 0)}px solid ${line};
  ${(p) => (p.$bottom ? "border-top: 0;" : "border-bottom: 0;")}
  ${(p) => p.$active && !p.$bottom && "padding-bottom: 2px;"}
  ${(p) => p.$active && "position: relative;"}
`;
const Pane = styled.div`
  flex: 1;
  min-height: 0;
  display: flex;
  flex-direction: column;
  gap: 2px;
  margin-top: -1px;
  padding: 3px 3px 2px;
  border: 1px solid ${line};
  border-radius: 0 3px 3px 3px;
`;
const TreeBox = styled.div`
  flex: 347 1 0;
  min-height: 0;
  border: 1px solid ${line};
  border-radius: 3px;
  background: ${paper};
  overflow: hidden;
`;
const LowerPane = styled.div`
  flex: 413 1 0;
  min-height: 0;
  display: flex;
  flex-direction: column;
`;
const PropertyFrame = styled.div`
  flex: 1;
  min-height: 0;
  display: flex;
  padding: 3px;
  border: 1px solid ${line};
  border-radius: 3px 3px 3px 0;
`;
const PropertyBox = styled.div`
  flex: 1;
  border: 1px solid ${line};
  border-radius: 2px;
  background: ${paper};
`;
const Table = styled.table`
  width: 100%;
  table-layout: fixed;
  border-collapse: separate;
  border-spacing: 0;
`;
const Th = styled.th<{ $w?: number }>`
  width: ${(p) => (p.$w ? `${p.$w}px` : "auto")};
  height: 30px;
  padding: 0 0 0 6px;
  font-weight: 400;
  text-align: left;
  white-space: nowrap;
  background: ${chrome};
  border-bottom: 1px solid #d4d6d7;
  border-right: ${(p) => (p.$w ? 1 : 0)}px solid #c3c5c6;
`;
const Td = styled.td<{ $h: number }>`
  height: ${(p) => p.$h}px;
  padding: 0;
`;
const TreeCell = styled.div<{ $depth: number; $muted?: boolean; $bold?: boolean }>`
  display: flex;
  align-items: center;
  padding-left: ${(p) => p.$depth * 20}px;
  color: ${(p) => (p.$muted ? "#adafb1" : ink)};
  font-weight: ${(p) => (p.$bold ? 600 : 400)};
`;
const Root = styled.div`
  padding: 0 0 1px 3px;
`;
const Branch = styled.svg`
  display: block;
  width: 20px;
  height: 26px;
`;
const TreeIcon = styled.span`
  display: block;
  margin: 0 6px 0 3px;
`;
const Toggle = () => (
  <button aria-label="Collapse">
    <Branch viewBox="0 0 20 26" fill="none">
      <path d="M9.500 0V5M14 13.500H20" stroke="#c4c6c7" />
      <path d="M5.500 10.500L10 15L14.500 10.500" stroke={ink} />
    </Branch>
  </button>
);

const DocIcon = () => (
  <IconSvg viewBox="0 0 16 16" $s={16} aria-hidden>
    <path d="M1.500 .5H14.500V15.500H1.500Z" fill="#e4e5e6" stroke="#a3a5a7" />
    <circle cx="10.500" cy="5" r="3.500" fill="#d81c1c" />
    <path d="M3 7L7 5L11 7V12L7 14L3 12Z" fill="#4f7fbd" stroke="#12294a" />
    <path d="M3 7L7 9L11 7M7 9V14" fill="none" stroke="#1b3a69" />
  </IconSvg>
);
const WallIcon = () => (
  <IconSvg viewBox="0 0 64 64" $s={16} aria-hidden>
    <g fill="#d4d6d6" stroke="#55585b" strokeWidth="4" strokeLinejoin="round">
      <path d="M3 10L22 3L61 14V50L42 61L3 48Z" />
      <path d="M3 10L42 22L61 14M42 22V61M3 22L42 35L61 26M3 35L42 48L61 38M22 16V28M32 32V44M16 27V39" fill="none" />
    </g>
  </IconSvg>
);
const SketchIcon = () => (
  <IconSvg viewBox="0 0 16 16" $s={16} fill="none" stroke="#a0a2a4" strokeWidth="2" aria-hidden>
    <path d="M1 6H11V15H1Z" />
    <circle cx="10" cy="6" r="5" />
  </IconSvg>
);
const FreeCadIcon = () => (
  <IconSvg viewBox="0 0 16 16" $s={16} aria-hidden>
    <circle cx="10.500" cy="10.500" r="4" fill="none" stroke="#3a5f96" strokeWidth="3" strokeDasharray="2 1" />
    <circle cx="10.500" cy="10.500" r="3" fill="none" stroke="#5a83b8" strokeWidth="2" />
    <path d="M.5 .5H8V4H4.500V6.500H7V9.500H4.500V15.500H.5Z" fill="#e01b1b" stroke="#6b0c0c" />
  </IconSvg>
);

/* ---------- 3D view ---------- */

const ViewColumn = styled.main`
  flex: 1;
  min-width: 0;
  display: flex;
  flex-direction: column;
`;
const Viewport = styled.div`
  flex: 1;
  min-height: 0;
  position: relative;
  overflow: hidden;
  background: linear-gradient(#333366, #9898ab);
`;
const WallModel = styled.svg`
  position: absolute;
  left: calc(50% - 59px);
  top: calc(50% - 74px);
  width: 260px;
  height: 160px;
`;
const NavCube = styled.svg`
  position: absolute;
  right: 0;
  top: 0;
  width: 160px;
  height: 153px;
`;
const AxisCross = styled.svg`
  position: absolute;
  right: 0;
  bottom: 0;
  width: 50px;
  height: 65px;
`;
const MdiTabs = styled.div`
  flex: none;
  display: flex;
  height: 27px;
  border-top: 1px solid #c6c7ca;
`;
const MdiTab = styled.div<{ $active?: boolean }>`
  display: flex;
  align-items: center;
  gap: 9px;
  padding: 0 8px 0 7px;
  border-radius: 0 0 3px 3px;
  background: ${(p) => (p.$active ? chrome : "#cfd0d1")};
  border: ${(p) => (p.$active ? "1px solid " + line : "0 solid transparent")};
  border-top: 0;
  ${(p) => p.$active && "margin-top: -1px; padding: 1px 6px 0;"}
`;

const gridLines = (n: number, from: number[], to: number[], across: number[]) =>
  Array.from({ length: n + 1 }, (_, i) => {
    const x = from[0] + ((to[0] - from[0]) * i) / n;
    const y = from[1] + ((to[1] - from[1]) * i) / n;
    return `M${x} ${y}l${across[0]} ${across[1]}`;
  }).join("");

const Scene = () => (
  <>
    <WallModel viewBox="0 0 780 480" aria-label="Wall model">
      <path d="M148 181L396 78L498 325L250 429Z" fill="#4c4a68" />
      <path
        d={gridLines(10, [148, 181], [396, 78], [102, 248]) + gridLines(10, [148, 181], [250, 429], [248, -103])}
        stroke="#3e3c5c" strokeWidth="2" fill="none"
      />
      <path d="M272 130L374 377" stroke="#2c2a50" strokeWidth="3" />
      <path d="M180 233L685 60L726 187L608 270L103 441L59 315Z" fill="#0a0a0a" />
      <path d="M192 270L440 187L474 272L220 357Z" fill="#9a98a8" />
      <clipPath id="opening"><path d="M192 270L440 187L474 272L220 357Z" /></clipPath>
      <path
        clipPath="url(#opening)"
        d={gridLines(10, [148, 181], [396, 78], [102, 248]) + gridLines(10, [148, 181], [250, 429], [248, -103])}
        stroke="#6b697f" strokeWidth="3" fill="none"
      />
      <path clipPath="url(#opening)" d="M272 130L374 377M199 305L447 202" stroke="#2c2a50" strokeWidth="3" />
      <path d="M459 137L685 60L726 187L474 272L440 187L483 172Z" fill="#fff" />
      <path d="M59 315L180 233L220 357L103 441Z" fill="#101010" />
      <path d="M59 315L103 441L220 359M103 441L608 270L726 187L685 60L459 137M59 315L180 233L459 137M726 187L474 272L220 357" fill="none" stroke="#1c1c1c" strokeWidth="5" />
    </WallModel>
    <NavCube viewBox="0 21 480 459" aria-label="Navigation cube">
      <g fill="#8e8eac">
        <path d="M262 42L297 77H228ZM262 438L294 402H228ZM65 240L99 206V273ZM459 240L423 204V276Z" />
        <path d="M204 63L210 84C182 93 160 107 143 124L153 137L114 147L118 99L130 109C150 88 176 71 204 63Z" />
        <path d="M318 63L312 84C340 93 362 107 379 124L370 137L408 147L404 99L392 109C372 88 346 71 318 63Z" />
      </g>
      <path d="M148 190L160 176L290 124L322 134L376 260L370 292L234 354L204 340L150 218Z" fill="#9494b2" />
      <path d="M170 200L300 146L354 278L222 332Z" fill="#b4b4cb" />
      <path d="M192 190L284 152L310 160L345 248L340 272L246 310L222 300L180 210Z" fill="#cacadc" stroke="#a0a0bb" strokeWidth="3" />
      <g fill="#cfcfe0" opacity="0.8">
        <circle cx="296" cy="134" r="12" /><circle cx="159" cy="196" r="13" /><circle cx="366" cy="280" r="13" /><circle cx="216" cy="342" r="13" />
        <circle cx="290" cy="166" r="13" /><circle cx="334" cy="270" r="13" /><circle cx="230" cy="318" r="13" />
      </g>
      <path d="M170 202L264 161" stroke="#a8f0b0" strokeWidth="6" />
      <path d="M170 202L206 298" stroke="#ee8a92" strokeWidth="6" />
      <path d="M136 188L168 202" stroke="#1414e0" strokeWidth="6" />
      <circle cx="170" cy="201" r="4" fill="#00d000" />
      <g fontFamily="Liberation Sans, sans-serif">
        <text transform="translate(248 241) rotate(67)" textAnchor="middle" fontSize="46" stroke="#000" strokeWidth="2" fill="#000">TOP</text>
        <text x="121" y="181" fontSize="28" fill="#0000f0">Z</text>
        <text x="304" y="150" fontSize="28" fill="#7cf07c">Y</text>
        <text x="226" y="334" fontSize="26" fill="#f09090">X</text>
      </g>
      <path d="M330 374L360 363L390 374V412L362 424L330 412Z" fill="#8383a3" />
      <path d="M330 374L360 363L390 374L362 382Z" fill="#a0a0bb" />
      <path d="M330 374L362 382V424L330 412Z" fill="#8e8eab" />
      <path d="M402 384H438L420 402Z" fill="#3a3a54" />
    </NavCube>
    <AxisCross viewBox="-18 0 150 195" aria-label="Axis cross">
      <path d="M12 73L60 50" stroke="#238023" strokeWidth="5" />
      <path d="M86 42L58 44L66 62Z" fill="#238023" />
      <path d="M12 76L36 130" stroke="#8c2424" strokeWidth="5" />
      <path d="M44 154L22 132L42 122Z" fill="#8c2424" />
      <path d="M2 66L12 62L20 68V78L10 84L2 78Z" fill="#20208c" />
      <g fontFamily="Liberation Sans, sans-serif" fontSize="27" fill="#000">
        <text x="95" y="44">Y</text>
        <text x="19" y="74">Z</text>
        <text x="49" y="152">X</text>
      </g>
    </AxisCross>
  </>
);

/* ---------- report view and status bar ---------- */

const ReportBox = styled.div`
  flex: 1;
  min-height: 0;
  position: relative;
  display: flex;
  flex-direction: column;
  justify-content: flex-end;
  overflow: hidden;
  padding: 0 4px 18px;
  border: 1px solid ${line};
  border-radius: 3px;
  background: ${paper};
  color: #000;
`;
const ReportLine = styled.p`
  flex: none;
  margin: 0;
`;
const ScrollThumb = styled.span`
  position: absolute;
  right: 9px;
  bottom: 7px;
  width: 3px;
  height: 20px;
  border-radius: 2px;
  background: #b4b5b6;
`;
const StatusBar = styled.footer`
  flex: none;
  display: flex;
  align-items: center;
  justify-content: flex-end;
  gap: 13px;
  height: 40px;
  padding: 1px 1px 0 0;
`;
const NavStyle = styled.button`
  display: flex;
  align-items: center;
  gap: 7px;
`;
const MouseSvg = styled.svg`
  width: 10px;
  height: 14px;
`;
const NavArrow = styled.span`
  margin-left: 5px;
`;

export default function App() {
  return (
    <Desktop>
      <GlobalStyle />
      <Gradients />
      <AppWindow>
        <MenuBar>
          {["File", "Edit", "View", "Tools", "Macro", "Arch", "Draft", "Windows", "Help"].map((m) => (
            <MenuItem key={m}>{m}</MenuItem>
          ))}
        </MenuBar>
        <ToolbarArea>
          <ToolbarRow>
            <Tools label="File" items={fileTools} />
            <Tools label="Workbench" items={[]}>
              <ComboBox>
                <Icon name="house2" size={16} />
                <Select aria-label="Workbench" defaultValue="Arch">
                  <option>Arch</option>
                </Select>
                <Chevron />
              </ComboBox>
            </Tools>
            <Tools label="Macro" items={macroTools} />
          </ToolbarRow>
          <ToolbarRow>
            <Tools label="View" items={viewTools} />
            <Tools label="Structure" items={structTools} />
            <Tools label="Draft tray" items={[["apply", "Apply style", "s"]]}>
              <AutoButton><Icon name="plane" size={16} />Auto</AutoButton>
              <ToolButton aria-label="Construction mode" $w={28} $icon={16}><Icon name="plane2" size={16} /></ToolButton>
              <ToolButton aria-label="Line color" $w={28} $icon={16}><Swatch $c="#000" /></ToolButton>
              <ToolButton aria-label="Face color" $w={28} $icon={16}><Swatch $c="#fff" /></ToolButton>
              <Spin value="2px" label="Line width" width={65} />
              <Spin value="0.20" label="Font size" width={76} />
              <NoneButton><Icon name="none" size={16} />None</NoneButton>
            </Tools>
            <Tools label="Snap" items={snapTools} />
          </ToolbarRow>
          <ToolbarRow>
            <Tools label="Drafting" items={draftTools} />
            <Tools label="Annotation" items={noteTools} />
            <Tools label="Arch" items={archTools} />
          </ToolbarRow>
          <ToolbarRow>
            <Tools label="Modification" items={modTools} />
          </ToolbarRow>
        </ToolbarArea>

        <Center>
          <Dock $side>
            <Title name="Combo View" />
            <Tabs>
              <Tab $active>Model</Tab>
              <Tab>Tasks</Tab>
            </Tabs>
            <Pane>
              <TreeBox>
                <Table>
                  <thead>
                    <tr><Th $w={153}>Labels &amp; Attributes</Th><Th $w={100}>Description</Th><Th aria-label="More" /></tr>
                  </thead>
                  <tbody>
                    <tr><Td $h={24} colSpan={3}><Root>Application</Root></Td></tr>
                    <tr><Td $h={26}><TreeCell $depth={0} $bold><Toggle /><TreeIcon><DocIcon /></TreeIcon>wallbug</TreeCell></Td></tr>
                    <tr><Td $h={26}><TreeCell $depth={1}><Toggle /><TreeIcon><WallIcon /></TreeIcon>Wall</TreeCell></Td></tr>
                    <tr>
                      <Td $h={26}>
                        <TreeCell $depth={2} $muted>
                          <Branch viewBox="0 0 20 26" fill="none"><path d="M9.500 0V12.500H20" stroke="#c4c6c7" /></Branch>
                          <TreeIcon><SketchIcon /></TreeIcon>WallTrace
                        </TreeCell>
                      </Td>
                    </tr>
                  </tbody>
                </Table>
              </TreeBox>
              <LowerPane>
                <PropertyFrame>
                  <PropertyBox>
                    <Table>
                      <thead><tr><Th $w={94}>Property</Th><Th>Value</Th></tr></thead>
                    </Table>
                  </PropertyBox>
                </PropertyFrame>
                <Tabs>
                  <Tab $bottom>View</Tab>
                  <Tab $bottom $active>Data</Tab>
                </Tabs>
              </LowerPane>
            </Pane>
          </Dock>
          <ViewColumn>
            <Viewport><Scene /></Viewport>
            <MdiTabs>
              <MdiTab><FreeCadIcon />Start page<CloseButton dim /></MdiTab>
              <MdiTab $active><FreeCadIcon />wallbug : 1<CloseButton /></MdiTab>
            </MdiTabs>
          </ViewColumn>
        </Center>

        <Dock>
          <Title name="Report view" />
          <ReportBox>
            <ReportLine>----------------</ReportLine>
            <ReportLine>GuiCommand: Toggle grid</ReportLine>
            <ReportLine>----------------</ReportLine>
            <ReportLine>GuiCommand: Toggle grid</ReportLine>
            <ScrollThumb />
          </ReportBox>
        </Dock>
        <StatusBar>
          <NavStyle>
            <MouseSvg viewBox="0 0 10 14" fill="none" stroke={ink}>
              <rect x="1" y="1" width="8" height="12" rx="3" strokeWidth="2" />
              <path d="M5 3V6" />
            </MouseSvg>
            CAD
            <NavArrow><Chevron /></NavArrow>
          </NavStyle>
          <span>1846.59 mm x 902.50 mm</span>
        </StatusBar>
      </AppWindow>
    </Desktop>
  );
}
